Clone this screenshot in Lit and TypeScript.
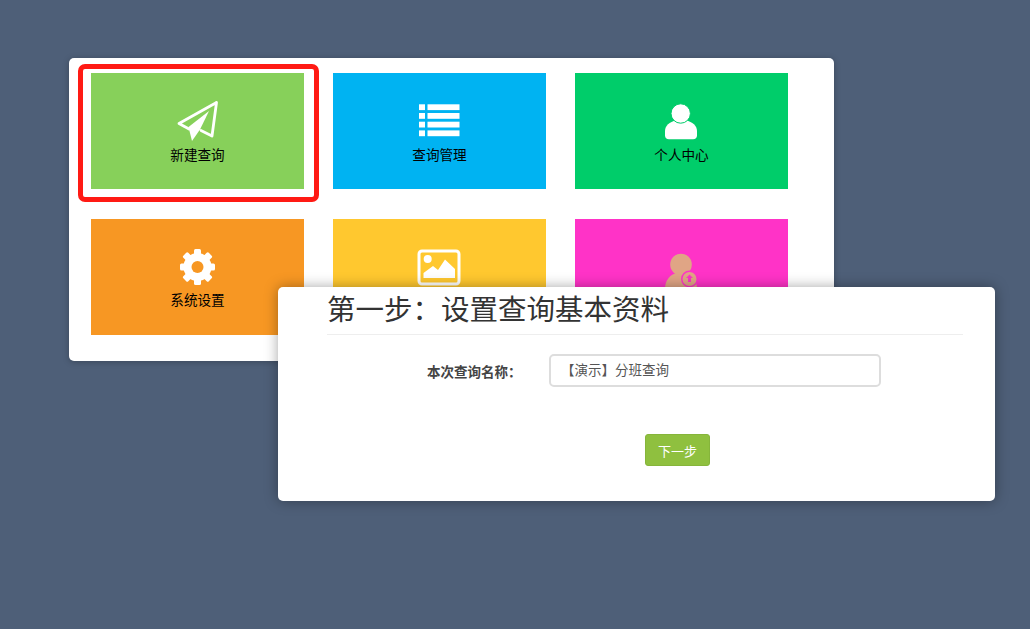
import { LitElement, html, css } from "lit";
import { customElement } from "lit/decorators.js";

@customElement("app-root")
export class AppRoot extends LitElement {
  static styles = css`
    :host {
      display: block;
      position: relative;
      box-sizing: border-box;
      height: 629px;
      padding: 58px 0 0 69px;
      overflow: hidden;
      background: #4e5f78;
      font-family: "Liberation Sans", "Noto Sans CJK SC", sans-serif;
    }
    .card {
      position: relative;
      box-sizing: border-box;
      width: 765px;
      height: 303px;
      padding: 15px 0 0 22px;
      background: #fff;
      border-radius: 5px;
      box-shadow: 0 1px 6px rgba(0, 0, 0, 0.25);
      display: grid;
      grid-template-columns: repeat(3, 213px);
      grid-auto-rows: 116px;
      column-gap: 29px;
      row-gap: 30px;
    }
    .tile {
      box-sizing: border-box;
      padding-top: 26px;
      display: flex;
      flex-direction: column;
      align-items: center;
      color: #000;
      font-size: 13.6px;
      line-height: 18px;
    }
    .tile svg { display: block; width: 44px; height: 44px; margin: 0 0 4px -1px; }
    .tile.low svg { margin-bottom: 3px; }
    .green { background: #87d05a; }
    .blue { background: #00b3f2; }
    .emerald { background: #00cd6a; }
    .orange { background: #f79723; }
    .yellow { background: #ffc82f; }
    .pink { background: #ff33c7; }
    .highlight {
      position: absolute;
      left: 9px;
      top: 6px;
      width: 241px;
      height: 138px;
      box-sizing: border-box;
      border: 5px solid #ff1a14;
      border-radius: 7px;
    }
    .panel {
      position: absolute;
      left: 278px;
      top: 287px;
      box-sizing: border-box;
      width: 717px;
      height: 214px;
      padding: 0 32px 0 50px;
      background: #fff;
      border-radius: 5px;
      box-shadow: 0 0 14px rgba(0, 0, 0, 0.35);
    }
    h1 {
      margin: 0 0 0 -1px;
      height: 48px;
      border-bottom: 1px solid #eee;
      box-sizing: border-box;
      font-size: 28.5px;
      font-weight: 400;
      line-height: 47px;
      color: #333;
      white-space: nowrap;
    }
    .row {
      display: flex;
      align-items: center;
      margin-top: 19px;
    }
    label {
      width: 190px;
      margin-right: 31px;
      padding-left: 99px;
      box-sizing: border-box;
      font-size: 13.5px;
      font-weight: 700;
      color: #444;
      white-space: nowrap;
    }
    .input {
      box-sizing: border-box;
      width: 332px;
      height: 33px;
      padding: 0 10px;
      border: 2px solid #ddd;
      border-radius: 5px;
      font-size: 13.5px;
      line-height: 29px;
      color: #555;
    }
    .next {
      display: block;
      box-sizing: border-box;
      width: 65px;
      height: 32px;
      margin: 47px 0 0 317px;
      padding: 0;
      border: 1px solid #86b53b;
      border-radius: 3px;
      background: #8fc03f;
      color: #fff;
      font: inherit;
      font-size: 13px;
    }
  `;

  render() {
    return html`
      <div class="card">
        <div class="tile green">
          <svg viewBox="0 0 44 44">
            <path d="M41.500 3.500 4 24.500l10 5.500M41.500 3.500 37 37l-11-5.500" fill="none" stroke="#fff" stroke-width="2.800" stroke-linejoin="round" stroke-linecap="round"/>
            <path d="M34 12 13.500 28l3.500 14 8-11.500z" fill="#fff"/>
          </svg>
          新建查询
        </div>
        <div class="tile blue">
          <svg viewBox="0 0 44 44" fill="#fff">
            <rect x="2" y="5.300" width="6" height="5.800"/><rect x="10.500" y="5.300" width="32" height="5.800"/>
            <rect x="2" y="14" width="6" height="5.800"/><rect x="10.500" y="14" width="32" height="5.800"/>
            <rect x="2" y="22.700" width="6" height="5.800"/><rect x="10.500" y="22.700" width="32" height="5.800"/>
            <rect x="2" y="31.400" width="6" height="5.800"/><rect x="10.500" y="31.400" width="32" height="5.800"/>
          </svg>
          查询管理
        </div>
        <div class="tile emerald">
          <svg viewBox="0 0 44 44" fill="#fff">
            <path d="M10 40.300h24c2.500 0 4-1.500 4-4v-4c0-6-4.500-9-11-11H17c-6.500 2-11 5-11 11v4c0 2.500 1.500 4 4 4z"/>
            <circle cx="21.700" cy="14.500" r="9.700" stroke="#00cd6a" stroke-width="1"/>
          </svg>
          个人中心
        </div>
        <div class="tile orange low">
          <svg viewBox="0 0 44 44" fill="#fff">
            <rect x="19" y="4" width="7" height="36" rx="1.500"/>
            <rect x="19" y="4" width="7" height="36" rx="1.500" transform="rotate(45 22.500 22)"/>
            <rect x="19" y="4.500" width="7" height="35" rx="1.500" transform="rotate(90 22.500 22)"/>
            <rect x="19" y="4" width="7" height="36" rx="1.500" transform="rotate(135 22.500 22)"/>
            <circle cx="22.500" cy="22" r="14"/>
            <circle cx="22.500" cy="22" r="6" fill="#f79723"/>
          </svg>
          系统设置
        </div>
        <div class="tile yellow low">
          <svg viewBox="0 0 44 44" fill="#fff">
            <rect x="2" y="6" width="40" height="33" rx="3" fill="none" stroke="#fff" stroke-width="3"/>
            <circle cx="10.700" cy="14" r="4"/>
            <path d="M6.500 33v-5l9.500-7 5 4L28 14.500 38 24v9z"/>
          </svg>
        </div>
        <div class="tile pink low">
          <svg viewBox="0 0 44 44" fill="#e0a585">
            <circle cx="22" cy="19.500" r="10.800"/>
            <path d="M6 44c0-9 5-14 11-16h10c6 2 11 7 11 16z"/>
            <circle cx="30.500" cy="34" r="8.500" fill="#ff33c7"/>
            <circle cx="30.500" cy="34" r="7"/>
            <path d="M30.500 29.500l3.500 3.500h-2v4h-3v-4h-2z" fill="#ff33c7"/>
          </svg>
        </div>
        <div class="highlight"></div>
      </div>
      <div class="panel">
        <h1>第一步：设置查询基本资料</h1>
        <div class="row">
          <label>本次查询名称：</label>
          <div class="input">【演示】分班查询</div>
        </div>
        <button class="next">下一步</button>
      </div>
    `;
  }
}
